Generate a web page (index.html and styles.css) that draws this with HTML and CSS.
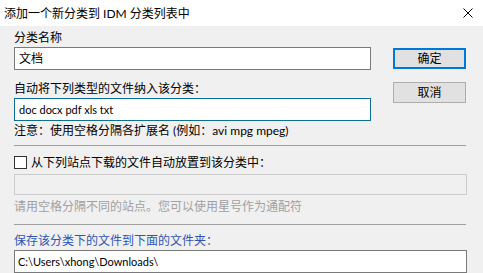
FILE: index.html
```html
<!DOCTYPE html>
<html lang="zh-CN">
<head>
    <meta charset="UTF-8">
    <title>添加一个新分类到 IDM 分类列表中</title>
    <link rel="stylesheet" href="styles.css">
</head>
<body>

<div class="titlebar">
    <span class="title">添加一个新分类到 IDM 分类列表中</span>
    <svg class="close" width="10" height="10" viewBox="0 0 10 10">
        <path d="M0.5 0.5 L9.5 9.5 M9.5 0.5 L0.5 9.5" stroke="#000" stroke-width="1" fill="none"/>
    </svg>
</div>

<div class="content">
    <div class="top">
        <div class="fields">
            <div class="label first">分类名称</div>
            <div class="input">文档</div>
            <div class="label">自动将下列类型的文件纳入该分类：</div>
            <div class="input focused latin">doc docx pdf xls txt</div>
            <div class="note">注意：使用空格分隔各扩展名 (例如：avi mpg mpeg)</div>
        </div>
        <div class="buttons">
            <div class="btn default">确定</div>
            <div class="btn">取消</div>
        </div>
    </div>

    <div class="sep"></div>

    <div class="check-row">
        <span class="checkbox"></span>
        <span>从下列站点下载的文件自动放置到该分类中：</span>
    </div>
    <div class="input wide disabled"></div>
    <div class="hint">请用空格分隔不同的站点。您可以使用星号作为通配符</div>

    <div class="sep second"></div>

    <div class="label blue">保存该分类下的文件到下面的文件夹：</div>
    <div class="input wide path latin">C:\Users\xhong\Downloads\</div>
</div>

</body>
</html>
```

FILE: styles.css
```css
body {
    margin: 0;
    background: #f0f0f0;
    font-family: Lato, "Noto Sans CJK SC", sans-serif;
    font-size: 12px;
    line-height: 15px;
    color: #000;
    overflow: hidden;
}
.titlebar {
    height: 26px;
    background: #fff;
    display: flex;
    align-items: center;
    justify-content: space-between;
    padding: 0 10px 0 4px;
}
.content {
    padding: 0 16px 0 14px;
}
.top {
    display: flex;
    gap: 22px;
}
.fields {
    width: 357px;
}
.label {
    height: 15px;
    margin-top: 11px;
    margin-bottom: 2px;
}
.label.first {
    margin-top: 4px;
}
.input {
    box-sizing: border-box;
    height: 23px;
    line-height: 21px;
    background: #fff;
    border: 1px solid #7a7a7a;
    padding: 0 4px;
}
.input.latin {
    font-size: 11px;
}
.input.focused {
    border-color: #0f6f8f;
}
.note {
    height: 15px;
    margin-top: 2px;
}
.buttons {
    display: flex;
    flex-direction: column;
    gap: 13px;
    padding-top: 22px;
}
.btn {
    box-sizing: border-box;
    width: 73px;
    height: 21px;
    line-height: 19px;
    text-align: center;
    background: #e1e1e1;
    border: 1px solid #adadad;
}
.btn.default {
    border: 2px solid #0078d7;
    line-height: 17px;
}
.sep {
    height: 1px;
    background: #a0a0a0;
    margin-top: 7px;
    width: 452px;
}
.sep.second {
    margin-top: 10px;
}
.check-row {
    display: flex;
    align-items: center;
    gap: 4px;
    margin-top: 10px;
    height: 13px;
}
.checkbox {
    box-sizing: border-box;
    width: 13px;
    height: 13px;
    border: 1px solid #333;
    background: #fff;
}
.input.wide {
    width: 453px;
}
.input.disabled {
    height: 21px;
    margin-top: 5px;
    background: #f0f0f0;
    border-color: #cccccc;
}
.hint {
    height: 15px;
    margin-top: 4px;
    color: #a0a0a0;
}
.label.blue {
    color: #2e55b4;
    margin-top: 8px;
}
.input.path {
    margin-top: 2px;
    padding-left: 3px;
}
```
